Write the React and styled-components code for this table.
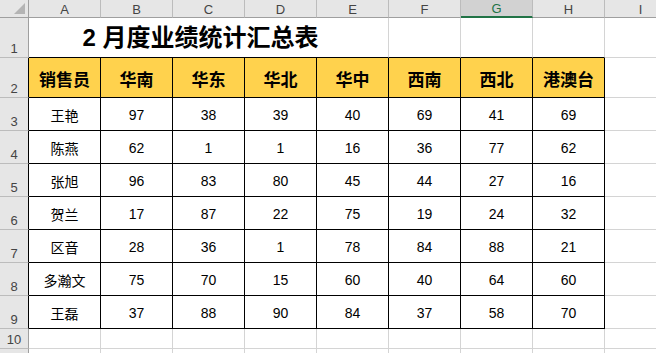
import styled, { createGlobalStyle } from "styled-components";

const GlobalStyle = createGlobalStyle`
  html, body {
    margin: 0;
    padding: 0;
    background: #ffffff;
    overflow: hidden;
  }
`;

const GRID = "#d4d4d4";
const HEAD_LINE = "#bcbcbc";
const EDGE = "#9f9f9f";

const Sheet = styled.div`
  display: grid;
  grid-template-columns: 29px repeat(8, 72px) 72px;
  grid-template-rows: 18px 40px 40px repeat(7, 33px) 20px 20px;
  width: 656px;
  height: 353px;
  overflow: hidden;
  font-family: "Liberation Sans", "Noto Sans CJK SC", sans-serif;
  color: #000;
`;

const Cell = styled.div`
  box-sizing: border-box;
  display: flex;
  justify-content: center;
  align-items: flex-end;
  border-right: 1px solid ${GRID};
  border-bottom: 1px solid ${GRID};
  min-width: 0;
`;

const Corner = styled(Cell)`
  position: relative;
  background: #e6e6e6;
  border-right: 1px solid ${EDGE};
  border-bottom: 1px solid ${EDGE};
  &::after {
    content: "";
    position: absolute;
    right: 3px;
    bottom: 3px;
    width: 0;
    height: 0;
    border-left: 11px solid transparent;
    border-bottom: 11px solid #b4b4b4;
  }
`;

const ColHead = styled(Cell)`
  background: ${(p) => (p.$active ? "#d2d2d2" : "#e6e6e6")};
  color: ${(p) => (p.$active ? "#217346" : "#444")};
  border-right: 1px solid ${HEAD_LINE};
  border-bottom: ${(p) => (p.$active ? "2px solid #217346" : `1px solid ${EDGE}`)};
  font-size: 13px;
  align-items: center;
  padding-top: 1px;
`;

const RowHead = styled(Cell)`
  background: #e6e6e6;
  color: #444;
  font-size: 13px;
  border-right: 1px solid ${(p) => (p.$edge ? "#000" : EDGE)};
  border-bottom: 1px solid ${HEAD_LINE};
  padding-bottom: 1px;
`;

const Blank = styled(Cell)`
  border-bottom: 1px solid ${(p) => (p.$dark ? "#000" : GRID)};
`;

const TitleCell = styled(Cell)`
  grid-column: 2 / 7;
  border-bottom: 1px solid #000;
  font-size: 24px;
  font-weight: bold;
  padding-right: 16px;
  padding-bottom: 4px;
  white-space: nowrap;
`;

const TableCell = styled(Cell)`
  background: ${(p) => (p.$head ? "#ffd24d" : "#ffffff")};
  border-right: 1px solid #000;
  border-bottom: 1px solid #000;
  font-size: ${(p) => (p.$head ? "17px" : "14px")};
  font-weight: ${(p) => (p.$head ? "bold" : "normal")};
  align-items: center;
  padding-top: ${(p) => (p.$head ? "2px" : "2px")};
  white-space: nowrap;
`;

const columns = ["A", "B", "C", "D", "E", "F", "G", "H", "I"];
const heads = ["销售员", "华南", "华东", "华北", "华中", "西南", "西北", "港澳台"];
const rows = [
  ["王艳", 97, 38, 39, 40, 69, 41, 69],
  ["陈燕", 62, 1, 1, 16, 36, 77, 62],
  ["张旭", 96, 83, 80, 45, 44, 27, 16],
  ["贺兰", 17, 87, 22, 75, 19, 24, 32],
  ["区音", 28, 36, 1, 78, 84, 88, 21],
  ["多瀚文", 75, 70, 15, 60, 40, 64, 60],
  ["王磊", 37, 88, 90, 84, 37, 58, 70],
];

const App = () => {
  return (
    <>
      <GlobalStyle />
      <Sheet>
        <Corner />
        {columns.map((c) => (
          <ColHead key={c} $active={c === "G"}>{c}</ColHead>
        ))}

        <RowHead>1</RowHead>
        <TitleCell>2 月度业绩统计汇总表</TitleCell>
        <Blank $dark />
        <Blank $dark />
        <Blank $dark />
        <Blank />

        <RowHead $edge>2</RowHead>
        {heads.map((h) => (
          <TableCell key={h} $head>{h}</TableCell>
        ))}
        <Blank />

        {rows.map((r, i) => [
          <RowHead key={`h${i}`} $edge>{i + 3}</RowHead>,
          ...r.map((v, j) => <TableCell key={`${i}-${j}`}>{v}</TableCell>),
          <Blank key={`b${i}`} />,
        ])}

        <RowHead>10</RowHead>
        {columns.map((c) => (
          <Blank key={`r10${c}`} />
        ))}
        <RowHead>11</RowHead>
        {columns.map((c) => (
          <Blank key={`r11${c}`} />
        ))}
      </Sheet>
    </>
  );
};

export default App;
